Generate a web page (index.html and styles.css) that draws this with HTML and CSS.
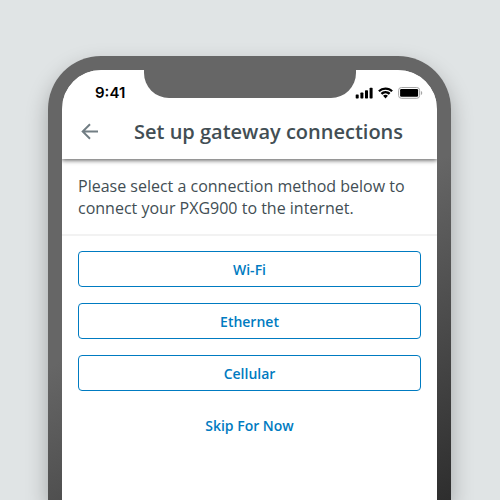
FILE: index.html
```html
<!DOCTYPE html>
<html lang="en">
<head>
<meta charset="utf-8">
<title>Set up gateway connections</title>
<link rel="stylesheet" href="styles.css">
</head>
<body>
<div class="phone">
  <main class="screen">
    <header class="header">
      <div class="status">
        <span class="time">9:41</span>
        <svg class="status-icons" width="68" height="14" viewBox="0 0 68 14">
          <rect x="0.7" y="8.4" width="3" height="4" rx=".7"/>
          <rect x="5.4" y="6.5" width="3" height="5.9" rx=".7"/>
          <rect x="10" y="4.2" width="3" height="8.2" rx=".7"/>
          <rect x="14.6" y="1.7" width="3" height="10.7" rx=".7"/>
          <path d="M30.5 1.5c2.9 0 5.5 1.1 7.4 2.9l-1.6 1.7a8.4 8.4 0 0 0-11.6 0l-1.6-1.7a10.7 10.7 0 0 1 7.4-2.9z"/>
          <path d="M30.5 5.1c1.9 0 3.6.7 4.9 1.9l-1.6 1.7a4.8 4.8 0 0 0-6.6 0L25.6 7a7.1 7.1 0 0 1 4.9-1.9z"/>
          <path d="M30.5 8.8c.9 0 1.8.35 2.45.95L30.5 12.4l-2.45-2.65a3.6 3.6 0 0 1 2.45-.95z"/>
          <rect class="battery-shell" x="43.6" y="1.5" width="21" height="10.8" rx="2.8"/>
          <rect x="45.1" y="3.1" width="18" height="7.600" rx="1.2"/>
          <path class="battery-cap" d="M65.900 5v4c.8-.4 1.300-1.100 1.300-2S66.700 5.400 65.900 5z"/>
        </svg>
      </div>
      <div class="toolbar">
        <svg class="back" width="18" height="18" viewBox="0 0 18 18"><path d="M17 8.500H2M9 1.200L1.700 8.500 9 15.800"/></svg>
        <h1 class="title">Set up gateway connections</h1>
      </div>
    </header>
    <p class="intro">Please select a connection method below to connect your PXG900 to the internet.</p>
    <div class="actions">
      <button class="button">Wi-Fi</button>
      <button class="button">Ethernet</button>
      <button class="button">Cellular</button>
      <button class="button button-text">Skip For Now</button>
    </div>
  </main>
  <div class="notch"></div>
</div>
</body>
</html>
```
FILE: styles.css
```css
* { box-sizing: border-box; }
body {
  display: flex;
  height: 500px;
  margin: 0;
  padding: 56px 0 0 48px;
  overflow: hidden;
  background: #e0e4e5;
  font-family: "Open Sans", sans-serif;
  color: #424e54;
}
.phone {
  position: relative;
  width: 403px;
  height: 444px;
  padding: 14px 14px 0;
  border-radius: 53px 53px 0 0;
  background: linear-gradient(152deg, #666 275px, #2c2c2c 590px);
  box-shadow: 0 10px 22px rgba(0, 0, 0, .28);
}
.screen {
  height: 430px;
  overflow: hidden;
  border-radius: 39px 39px 0 0;
  background: #fff;
}
.notch {
  position: absolute;
  top: 13px;
  left: 95.5px;
  width: 212px;
  height: 29px;
  border-radius: 0 0 25px 25px;
  background: #666;
}
.header {
  position: relative;
  height: 89px;
  background: #fff;
  box-shadow: 0 0 5px rgba(0, 0, 0, .55), 0 2px 4px rgba(0, 0, 0, .3);
}
.status {
  display: flex;
  justify-content: space-between;
  height: 44px;
  padding: 16px 14px 0 33px;
}
.time {
  margin-top: -1px;
  color: #000;
  font: 600 15px/15px Inter, sans-serif;
}
.status-icons { fill: #000; }
.status-icons .battery-shell { fill: none; stroke: #a6a6a6; }
.status-icons .battery-cap { fill: #a6a6a6; }
.toolbar {
  display: flex;
  align-items: center;
  height: 36px;
  padding-left: 19px;
}
.back { fill: none; stroke: #727e84; stroke-width: 2; }
.title {
  margin: 0 0 0 35px;
  font-size: 20px;
  font-weight: 600;
  line-height: 28px;
  white-space: nowrap;
}
.intro {
  height: 77px;
  margin: 0;
  padding: 16px 16px 0;
  border-bottom: 2px solid #f2f2f2;
  font-size: 16px;
  line-height: 22px;
}
.actions {
  display: grid;
  gap: 16px;
  padding: 15px 16px;
}
.button {
  height: 36px;
  padding: 1px 0 0;
  border: 1px solid #007bc1;
  border-radius: 4px;
  background: #fff;
  color: #007bc1;
  font: 600 14px/20px "Open Sans", sans-serif;
}
.button-text { border-color: transparent; }
```
